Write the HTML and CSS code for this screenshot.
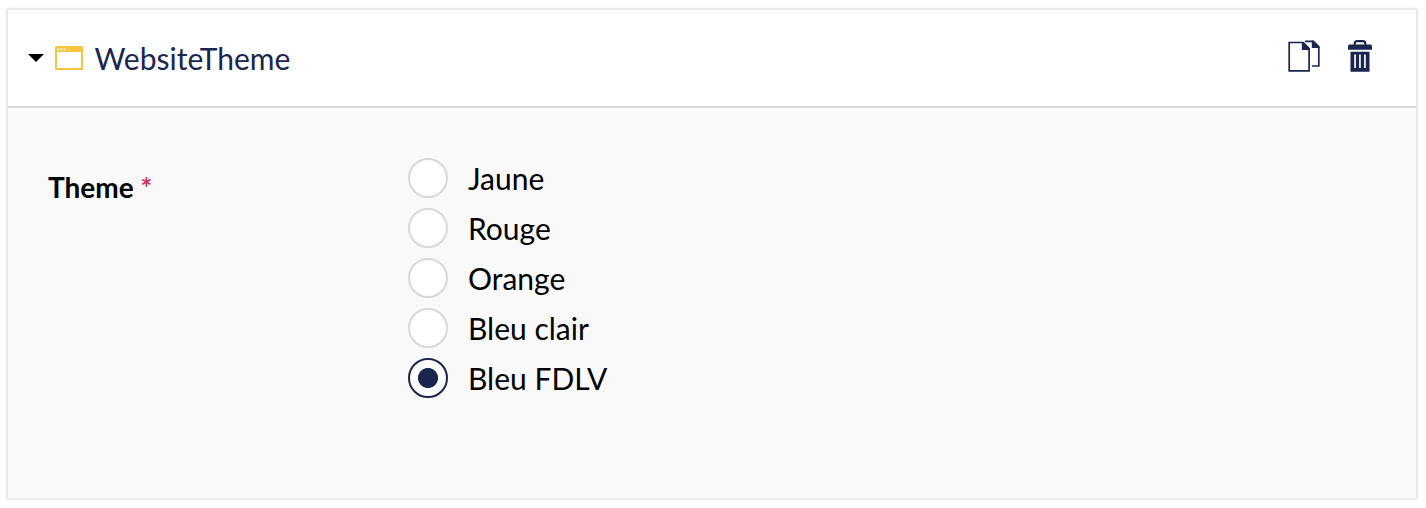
FILE: index.html
```html
<!DOCTYPE html>
<html lang="fr">
<head>
<meta charset="utf-8">
<title>WebsiteTheme</title>
<link rel="stylesheet" href="styles.css">
</head>
<body>
<section class="block">
  <header class="block-header">
    <svg class="caret" width="16" height="8" viewBox="0 0 16 8"><path d="M0 0H16L8 8Z"/></svg>
    <svg class="window-icon" width="28" height="24" viewBox="0 0 28 24">
      <rect width="28" height="24" rx="1.2" fill="#f7c540"/>
      <path fill="#fff" d="M2 6H26V22H2ZM2.2 2.4h1.8v1.8H2.2ZM5.2 2.4H7v1.8H5.2ZM8.3 2.4h1.8v1.8H8.3Z"/>
    </svg>
    <h1 class="block-title">WebsiteTheme</h1>
    <div class="actions">
      <svg class="copy-icon" width="32" height="32" viewBox="0 0 32 32">
        <path class="page" d="M1.2 2.5H15L21.1 8.6V30.8H1.2Z"/>
        <path class="fold" d="M13.8 2H15.5L22 8.5V10H13.8Z"/>
        <path class="page" d="M17 1.3H25L30.8 7V26H24"/>
        <path class="fold" d="M23.8 .5H25.5L31.6 6.5V8H23.8Z"/>
      </svg>
      <svg class="trash-icon" width="24" height="32" viewBox="0 0 24 32">
        <path class="handle" d="M6.7 5V3.6Q6.7 1.2 9.1 1.2H14.9Q17.3 1.2 17.3 3.6V5"/>
        <path class="fold" d="M1.8 4.5H22.2Q24 4.5 24 6.3V9.8H0V6.3Q0 4.5 1.8 4.5Z"/>
        <path class="fold" fill-rule="evenodd" d="M2.5 11.7H21.5V31.7H2.5ZM6.2 14.5V28H7.9V14.5ZM11.1 14.5V28H12.8V14.5ZM16.1 14.5V28H17.8V14.5Z"/>
      </svg>
    </div>
  </header>
  <div class="block-body">
    <div class="field-label">Theme <span class="required">*</span></div>
    <div class="options">
      <label class="option"><input class="radio" type="radio" name="theme">Jaune</label>
      <label class="option"><input class="radio" type="radio" name="theme">Rouge</label>
      <label class="option"><input class="radio" type="radio" name="theme">Orange</label>
      <label class="option"><input class="radio" type="radio" name="theme">Bleu clair</label>
      <label class="option"><input class="radio" type="radio" name="theme" checked>Bleu FDLV</label>
    </div>
  </div>
</section>
</body>
</html>
```
FILE: styles.css
```css
* { box-sizing: border-box; }
body {
  margin: 0;
  padding: 10px 10px 10px 8px;
  height: 508px;
  background: #fff;
  color: #000;
  font-family: Lato, sans-serif;
  font-size: 30px;
}
.block {
  display: flex;
  flex-direction: column;
  height: 488px;
  background: #f9f9f9;
  border-radius: 1px;
  box-shadow: 0 0 1px 1.5px #e9e9e9, 0 0 4px 1px #f2f2f2;
}
.block-header {
  display: flex;
  height: 98px;
  padding: 0 44px 0 20px;
  background: #fff;
  border-bottom: 2px solid #d8d8d8;
}
.caret { margin-top: 44px; }
.window-icon { margin: 36px 0 0 11px; }
.block-title {
  margin: 30px 0 0 11.5px;
  font-size: 30px;
  font-weight: 400;
  line-height: 36px;
  color: #1b264f;
}
.actions {
  display: flex;
  gap: 28px;
  margin: 30px 0 0 auto;
}
.page { fill: none; stroke: #1b264f; stroke-width: 1.7; }
.handle { fill: none; stroke: #1b264f; stroke-width: 2.2; }
.fold { fill: #1b264f; }
.block-body { display: flex; padding: 50px 40px 0; }
.field-label {
  width: 360px;
  padding-top: 11px;
  font-size: 28px;
  font-weight: 700;
  line-height: 36px;
}
.required { color: #c9375f; }
.options { display: flex; flex-direction: column; gap: 10px; }
.option {
  display: flex;
  gap: 20px;
  height: 40px;
  line-height: 40px;
}
.radio {
  appearance: none;
  flex: none;
  width: 40px;
  height: 40px;
  margin: 0;
  background: #fff;
  border: 2px solid #d8d8d8;
  border-radius: 50%;
}
.radio:checked {
  border-color: #1b264f;
  background: radial-gradient(circle, #1b264f 9.6px, #fff 10.4px);
}
```
